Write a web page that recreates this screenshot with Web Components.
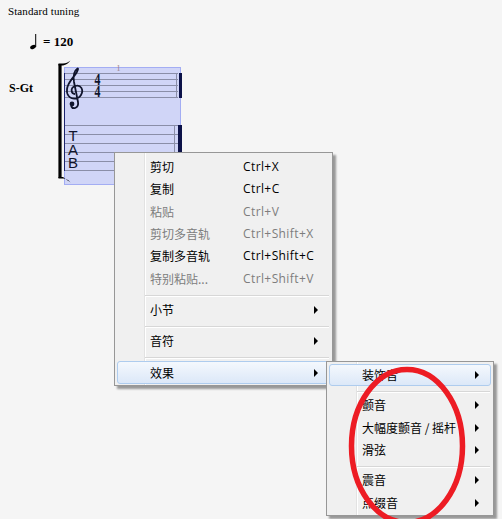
<!DOCTYPE html>
<html>
<head>
<meta charset="utf-8">
<title>Score</title>
<style>
  html, body { margin: 0; height: 100%; }
  body { background: #f5f5f5; width: 502px; height: 519px; position: relative; overflow: hidden; }
</style>
</head>
<body>
<score-sheet></score-sheet>

<context-menu style="left:114px;top:152px;width:213px;padding:3px 2px 1px;--sep:9px">
  <menu-item>剪切<span slot="shortcut">Ctrl+X</span></menu-item>
  <menu-item>复制<span slot="shortcut">Ctrl+C</span></menu-item>
  <menu-item disabled>粘贴<span slot="shortcut">Ctrl+V</span></menu-item>
  <menu-item disabled>剪切多音轨<span slot="shortcut">Ctrl+Shift+X</span></menu-item>
  <menu-item>复制多音轨<span slot="shortcut">Ctrl+Shift+C</span></menu-item>
  <menu-item disabled>特别粘贴...<span slot="shortcut">Ctrl+Shift+V</span></menu-item>
  <menu-sep></menu-sep>
  <menu-item arrow>小节</menu-item>
  <menu-sep></menu-sep>
  <menu-item arrow>音符</menu-item>
  <menu-sep></menu-sep>
  <menu-item arrow active>效果</menu-item>
</context-menu>

<context-menu style="left:326px;top:361px;width:162px;padding:2px 2px 1px;--sep:8px">
  <menu-item arrow active>装饰音</menu-item>
  <menu-sep></menu-sep>
  <menu-item arrow>颤音</menu-item>
  <menu-item arrow>大幅度颤音 / 摇杆</menu-item>
  <menu-item arrow>滑弦</menu-item>
  <menu-sep></menu-sep>
  <menu-item arrow>震音</menu-item>
  <menu-item arrow>点缀音</menu-item>
</context-menu>

<red-circle></red-circle>

<template id="score-tpl">
  <style>
    :host { display: block; padding: 5px 0 0 8px; font-family: "Liberation Serif", serif; color: #000; }
    .title { font-size: 11px; letter-spacing: .1px; line-height: 12px; }
    .tempo { display: flex; align-items: center; gap: 5px; margin: 17px 0 0 21px; height: 16px; font-weight: bold; font-size: 13px; }
    .tempo svg { display: block; }
    .system { display: flex; margin-top: 8px; }
    .label { width: 46px; padding: 23px 0 0 1px; font-weight: bold; font-size: 12px; line-height: 14px; }
    .staff { display: block; }
  </style>
  <div class="title">Standard tuning</div>
  <div class="tempo">
    <svg width="9" height="16" viewBox="0 0 9 16">
      <ellipse cx="4" cy="13" rx="3" ry="2" transform="rotate(-25 4 13)" fill="#000"/>
      <rect x="6.2" y="0" width="1" height="13" fill="#000"/>
    </svg>
    <span>= 120</span>
  </div>
  <div class="system">
    <div class="label">S-Gt</div>
    <svg class="staff" width="130" height="130" viewBox="55 58 130 130">
      <rect x="64.5" y="67.5" width="116" height="117" fill="#d0d5f7" stroke="#a3adf3"/>
      <g stroke="#8a8ea8" stroke-width="1">
        <path d="M64 73.5H178M64 79.5H178M64 85.5H178M64 91.5H178M64 97.5H178"/>
        <path d="M64 125.5H178M64 134.5H178M64 143.5H178M64 152.5H178M64 161.5H178M64 170.5H178"/>
        <path d="M176.5 73V98M174.5 125V171"/>
      </g>
      <path d="M64.5 73V171" stroke="#1c2470" stroke-width="1"/>
      <rect x="179" y="73" width="3" height="25" fill="#0c1248"/>
      <rect x="178" y="125" width="4" height="46" fill="#0c1248"/>
      <path d="M60 64V178" stroke="#000" stroke-width="3.2" fill="none"/>
      <path d="M58.5 63.5H63C66 63.5 68 62.5 70.5 60.5C68.5 63 66.5 65 63 65.5H58.5Z" fill="#000"/>
      <path d="M58.5 178.5H63C66 178.5 68 179.5 70.5 182.5C68.5 180.5 66.5 180 63 177H58.5Z" fill="#000"/>
      <text x="118.5" y="71" font-size="8" text-anchor="middle" fill="#9a7f8c" font-family="Liberation Serif">1</text>
      <path d="M75 94C71 94 70 88 75 86C81 84 84 90 81 95C78 100 70 100 67.5 94C65 87 71 80 75 75C78 71 79 67 77 69C74 71 73 75 74 82L78 102C79 108 73 110 71 106" fill="none" stroke="#10142c" stroke-width="1.8"/>
      <circle cx="72" cy="104" r="2.4" fill="#10142c"/>
      <g font-family="Liberation Serif" font-weight="bold" font-size="17" fill="#10142c">
        <text transform="translate(94.5 85) scale(.7 1)">4</text>
        <text transform="translate(94.5 97) scale(.7 1)">4</text>
      </g>
      <g font-family="Liberation Sans" font-size="15" fill="#10142c" text-anchor="middle">
        <text x="73" y="140.5">T</text>
        <text x="73" y="155">A</text>
        <text x="73" y="168">B</text>
      </g>
    </svg>
  </div>
</template>

<template id="menu-tpl">
  <style>
    :host { display: block; position: absolute; box-sizing: content-box; border: 1px solid #979797; background: #f0f0f0; box-shadow: 3px 3px 2px rgba(0,0,0,.38); font-family: "Open Sans", "Noto Sans CJK SC", sans-serif; font-size: 12px; color: #000; }
    .gutter { position: absolute; left: 29px; top: 0; bottom: 0; width: 1px; background: #e2e2e2; border-right: 1px solid #fff; }
    .items { position: relative; display: flex; flex-direction: column; }
  </style>
  <div class="gutter"></div>
  <div class="items"><slot></slot></div>
</template>

<template id="item-tpl">
  <style>
    :host { display: flex; box-sizing: border-box; height: 22.3px; align-items: center; padding: 0 11px 0 32px; border: 1px solid transparent; border-radius: 3px; font-family: "Noto Sans CJK SC", sans-serif; white-space: nowrap; line-height: 16px; }
    :host([disabled]) { color: #7d7d7d; }
    :host([active]) { border-color: #aeccee; background: linear-gradient(#f4f8fd, #dce8f8); }
    .label { width: 93px; flex: none; }
    .short { font-family: "Open Sans", sans-serif; font-size: 12px; letter-spacing: .4px; }
    .arrow { display: none; margin-left: auto; width: 0; height: 0; border-left: 4px solid #000; border-top: 4px solid transparent; border-bottom: 4px solid transparent; }
    :host([arrow]) .arrow { display: block; }
  </style>
  <span class="label"><slot></slot></span>
  <span class="short"><slot name="shortcut"></slot></span>
  <span class="arrow"></span>
</template>

<template id="sep-tpl">
  <style>
    :host { display: block; height: var(--sep, 9px); padding: 5px 1px 0 28px; box-sizing: border-box; }
    div { height: 1px; background: #d7d7d7; border-bottom: 1px solid #fff; }
  </style>
  <div></div>
</template>

<template id="circle-tpl">
  <style>
    :host { display: block; position: absolute; left: 340px; top: 360px; width: 140px; height: 159px; overflow: hidden; }
    svg { display: block; }
  </style>
  <svg width="140" height="159" viewBox="340 360 140 159">
    <ellipse cx="407" cy="446" rx="55.5" ry="76.5" fill="none" stroke="#ed1c24" stroke-width="5.5"/>
  </svg>
</template>

<script>
  // every element clones its own template into an open shadow root
  class TemplateElement extends HTMLElement {
    constructor(id) {
      super();
      this.attachShadow({ mode: 'open' });
      this.shadowRoot.appendChild(document.getElementById(id).content.cloneNode(true));
    }
  }

  class ScoreSheet extends TemplateElement { constructor() { super('score-tpl'); } }
  class ContextMenu extends TemplateElement { constructor() { super('menu-tpl'); } }
  class MenuItem extends TemplateElement { constructor() { super('item-tpl'); } }
  class MenuSep extends TemplateElement { constructor() { super('sep-tpl'); } }
  class RedCircle extends TemplateElement { constructor() { super('circle-tpl'); } }

  customElements.define('score-sheet', ScoreSheet);
  customElements.define('context-menu', ContextMenu);
  customElements.define('menu-item', MenuItem);
  customElements.define('menu-sep', MenuSep);
  customElements.define('red-circle', RedCircle);
</script>
</body>
</html>
